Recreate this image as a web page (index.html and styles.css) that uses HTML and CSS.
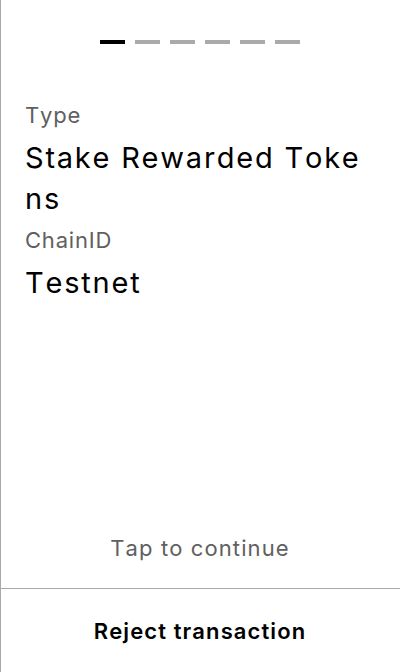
FILE: index.html
```html
<!DOCTYPE html>
<html>
<head>
<meta charset="utf-8">
<link rel="stylesheet" href="styles.css">
</head>
<body>
<div class="screen">
  <div class="main">
    <div class="steps">
      <span class="step active"></span>
      <span class="step"></span>
      <span class="step"></span>
      <span class="step"></span>
      <span class="step"></span>
      <span class="step"></span>
    </div>
    <div class="fields">
      <div class="label">Type</div>
      <div class="value">Stake Rewarded Tokens</div>
      <div class="label">ChainID</div>
      <div class="value">Testnet</div>
    </div>
    <div class="tap">Tap to continue</div>
  </div>
  <div class="footer">Reject transaction</div>
</div>
</body>
</html>
```
FILE: styles.css
```css
html, body {
  margin: 0;
  padding: 0;
  background: #fff;
}
body {
  font-family: Inter, "Noto Sans", sans-serif;
  font-kerning: none;
  font-optical-sizing: none;
  color: #000;
}
.screen {
  width: 400px;
  height: 672px;
  box-sizing: border-box;
  border-left: 1px solid #aaaaaa;
  display: flex;
  flex-direction: column;
}
.main {
  flex: 1;
  display: flex;
  flex-direction: column;
}
.steps {
  display: flex;
  justify-content: center;
  gap: 10px;
  margin-top: 40px;
  margin-left: -1px;
}
.step {
  width: 25px;
  height: 4px;
  background: #aaaaaa;
}
.step.active {
  background: #000;
}
.fields {
  flex: 1;
  display: flex;
  flex-direction: column;
  gap: 8px;
  padding: 58px 26px 0 24px;
}
.label {
  font-size: 22px;
  line-height: 27px;
  letter-spacing: 0.8px;
  color: #606060;
}
.value {
  font-size: 29px;
  line-height: 41px;
  letter-spacing: 1.8px;
  word-break: break-all;
}
.tap {
  text-align: center;
  font-size: 22px;
  line-height: 26px;
  letter-spacing: 1.1px;
  color: #606060;
  padding-bottom: 27px;
  margin-left: -1px;
}
.footer {
  height: 83px;
  border-top: 1px solid #aaaaaa;
  display: flex;
  align-items: center;
  justify-content: center;
  font-size: 22px;
  font-weight: 600;
  letter-spacing: 1.1px;
  margin-left: -1px;
}
```
